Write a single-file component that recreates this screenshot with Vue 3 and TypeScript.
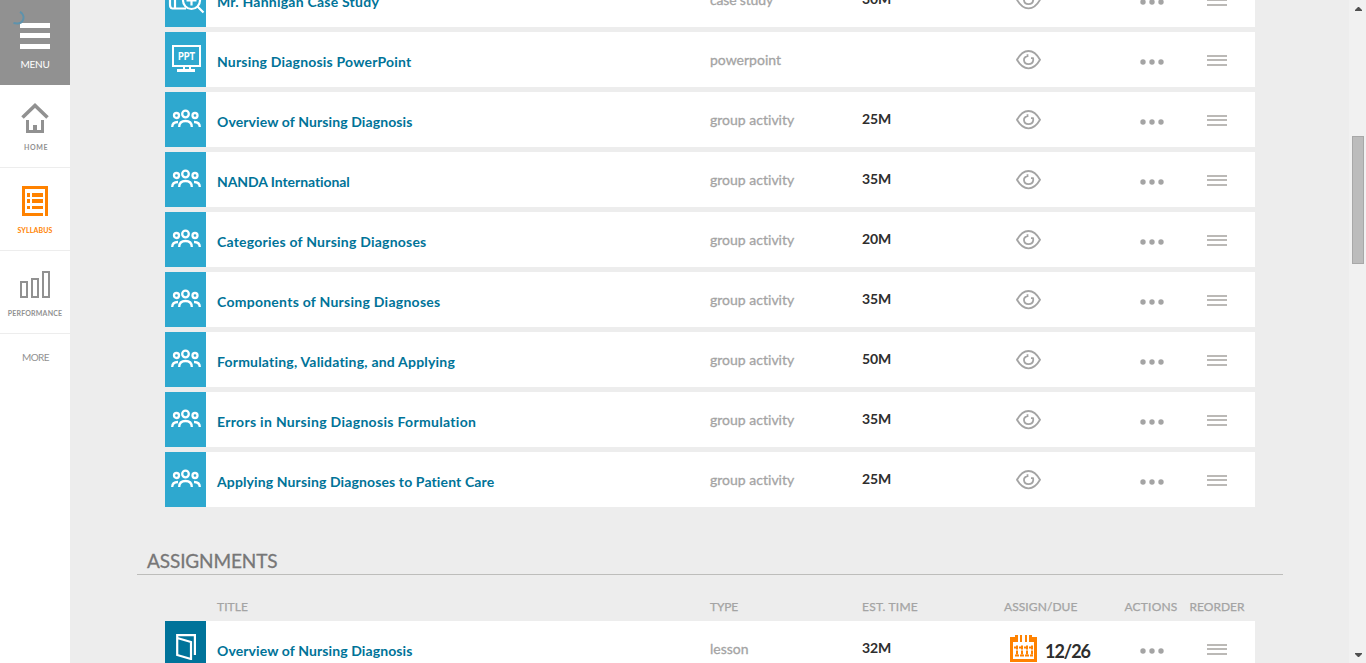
<script setup lang="ts">
type IconName = 'case' | 'ppt' | 'group' | 'lesson'
interface Activity {
  title: string
  width: number
  type: string
  typeWidth: number
  time: string
  icon: IconName
  due?: string
}

const group = (title: string, width: number, time: string): Activity => ({
  title, width, time, type: 'group activity', typeWidth: 84.5, icon: 'group',
})

const activities: Activity[] = [
  { title: 'Mr. Hannigan Case Study', width: 162, type: 'case study', typeWidth: 63, time: '30M', icon: 'case' },
  { title: 'Nursing Diagnosis PowerPoint', width: 194.5, type: 'powerpoint', typeWidth: 71, time: '', icon: 'ppt' },
  group('Overview of Nursing Diagnosis', 195.5, '25M'),
  group('NANDA International', 133, '35M'),
  group('Categories of Nursing Diagnoses', 209.5, '20M'),
  group('Components of Nursing Diagnoses', 223.5, '35M'),
  group('Formulating, Validating, and Applying', 238.5, '50M'),
  group('Errors in Nursing Diagnosis Formulation', 259.5, '35M'),
  group('Applying Nursing Diagnoses to Patient Care', 277.5, '25M'),
]
const assignments: Activity[] = [
  { title: 'Overview of Nursing Diagnosis', width: 195.5, type: 'lesson', typeWidth: 38.5, time: '32M', icon: 'lesson', due: '12/26' },
]
const sections = [
  { id: 'activities', rows: activities },
  { id: 'assignments', rows: assignments },
]

// Tracks a label so that it fills the given measure.
const vFit = {
  mounted(el: HTMLElement, binding: { value: number }) {
    const count = (el.textContent ?? '').length
    if (!count) return
    const natural = el.getBoundingClientRect().width
    el.style.letterSpacing = `${(binding.value - natural) / count}px`
  },
}
</script>

<template>
  <div class="app">
    <nav class="sidebar">
      <div class="menu">
        <svg class="spinner" width="14" height="16" viewBox="0 0 14 16"><path d="M7 .8C13 4 11.500 14.500 .500 12" fill="none" stroke="#5d93ad" stroke-width="2" /></svg>
        <svg width="30" height="26" viewBox="0 0 30 26"><path d="M0 0h30v5H0zM0 10h30v5H0zM0 21h30v5H0z" fill="#fff" /></svg>
        <span class="menu-label"><span v-fit="29">MENU</span></span>
      </div>
      <div class="nav-item home">
        <svg width="28" height="31" viewBox="0 0 28 31">
          <path d="M1.500 14.500L14 2.500L26.500 14.500" fill="none" stroke="#919191" stroke-width="3.600" />
          <path d="M5 17h3v10h4v-5h4v5h4V17h3v13H5z" fill="#919191" />
        </svg>
        <span class="nav-label"><span v-fit="24">HOME</span></span>
      </div>
      <div class="nav-item active">
        <svg width="26" height="30" viewBox="0 0 26 30" fill="#ff8200">
          <path d="M0 0h26v30h-3V3H3v24h18v3H0z" />
          <path d="M5 7h3v4H5zM10 7h11v4H10zM5 13h3v4H5zM10 13h11v4H10zM5 20h3v3H5zM10 20h11v3H10z" />
        </svg>
        <span class="nav-label"><span v-fit="35">SYLLABUS</span></span>
      </div>
      <div class="nav-item">
        <svg width="30" height="30" viewBox="0 0 30 30" fill="none" stroke="#919191" stroke-width="2">
          <path d="M1 11h6v15H1zM12 8h6v18h-6zM23 1h6v25h-6z" />
        </svg>
        <span class="nav-label"><span v-fit="54.5">PERFORMANCE</span></span>
      </div>
      <div class="more"><span v-fit="27">MORE</span></div>
    </nav>

    <main class="content">
      <section v-for="section in sections" :key="section.id" :class="section.id">
        <template v-if="section.id === 'assignments'">
          <h2><span v-fit="130.5">ASSIGNMENTS</span></h2>
          <div class="grid header">
            <i></i>
            <div class="title-head"><span v-fit="31">TITLE</span></div>
            <div><span v-fit="28">TYPE</span></div>
            <div><span v-fit="56">EST. TIME</span></div>
            <div class="due-head"><span v-fit="73.5">ASSIGN/DUE</span></div>
            <div class="center"><span v-fit="53">ACTIONS</span></div>
            <div class="center reorder"><span v-fit="55">REORDER</span></div>
          </div>
        </template>
        <div class="rows">
          <div v-for="row in section.rows" :key="row.title" class="grid row">
            <div class="tile" :class="row.icon">
              <svg v-if="row.icon === 'group'" width="30" height="20" viewBox="0 0 30 20" fill="none" stroke="#fff" stroke-width="2.300">
                <circle cx="14.500" cy="5" r="3.300" /><circle cx="5.500" cy="6.500" r="2.500" /><circle cx="24" cy="6.500" r="2.500" />
                <path d="M1.200 18c0-3.500 1.500-5 5.800-5M28.800 18c0-3.500-1.500-5-5.800-5M8.200 18c0-3.500 2-6 6.300-6s6.300 2.500 6.300 6" />
              </svg>
              <svg v-else-if="row.icon === 'ppt'" width="29" height="28" viewBox="0 0 29 28">
                <path d="M1 1h27v20H1z" fill="none" stroke="#fff" stroke-width="2" />
                <path d="M11 22h2v2h4v-2h2v2h4v3H5v-3h6z" fill="#fff" />
                <text x="6" y="15" textLength="17" lengthAdjust="spacingAndGlyphs" fill="#fff" class="ppt-text">PPT</text>
              </svg>
              <svg v-else-if="row.icon === 'case'" width="36" height="30" viewBox="0 0 36 30" fill="none" stroke="#fff" stroke-width="2.200">
                <path d="M18 26.500H4.500C2 26.500 2 24 2 22V2h18M7 2v24.500" />
                <circle cx="23.500" cy="18.500" r="8.500" /><path d="M29.500 24.500l6 6M23.500 13.500v10M18.500 18.500h10" />
              </svg>
              <svg v-else width="20" height="26" viewBox="0 0 20 26" fill="none" stroke="#fff" stroke-width="2.200">
                <path d="M1.200 4v17l13.800 4V8L1.200 4V1.200h17.700V21" />
              </svg>
            </div>
            <div class="title"><span v-fit="row.width">{{ row.title }}</span></div>
            <div class="type"><span v-fit="row.typeWidth">{{ row.type }}</span></div>
            <div class="time"><span v-fit="29">{{ row.time }}</span></div>
            <div v-if="row.due" class="due">
              <svg width="27" height="27" viewBox="0 0 27 27">
                <path d="M0 2h5V0h3v7H3v17h21V7h-5V0h3v2h5v25H0zM10 0h2v7h-2zM15 0h2v7h-2z" fill="#ff8200" />
                <path d="M4 12.500h19M5 20.500h18" stroke="#ff8200" stroke-width="2" stroke-dasharray="4 1" />
                <path d="M6 12.500h17M6 17.500h17" stroke="#ff8200" stroke-width="4" stroke-dasharray="2 3" />
              </svg>
              <b><span v-fit="45">{{ row.due }}</span></b>
            </div>
            <div v-else class="eye">
              <svg width="26" height="20" viewBox="0 0 26 20" fill="none" stroke="#a4a4a4" stroke-width="1.800">
                <path d="M1 9.800C4.500 3.500 8.500 1 12.500 1S20.500 3.500 24 9.800C20.500 16 16.500 18.300 12.500 18.300S4.500 16 1 9.800z" />
                <path d="M11.500 4.200v2C9 6.800 7.800 8 8 10.300c.6 5 8.300 5 9.200.2.100-.9.100-1.600-.2-2.300h-2" />
              </svg>
            </div>
            <div class="dots">
              <svg width="24" height="6" viewBox="0 0 24 6" fill="#a4a4a4"><circle cx="3" cy="3" r="2.700" /><circle cx="12" cy="3" r="2.700" /><circle cx="21" cy="3" r="2.700" /></svg>
            </div>
            <div class="handle">
              <svg width="20" height="11" viewBox="0 0 20 11"><path d="M0 0h20v2H0zM0 4h20v2H0zM0 9h20v2H0z" fill="#bbb9b6" /></svg>
            </div>
          </div>
        </div>
      </section>
    </main>

    <aside class="scrollbar">
      <svg width="7" height="4" viewBox="0 0 7 4"><path d="M0 4V3l3-3h1l3 3v1z" fill="#505050" /></svg>
      <div class="thumb"></div>
      <svg class="down" width="7" height="4" viewBox="0 0 7 4"><path d="M0 0v1l3 3h1l3-3V0z" fill="#505050" /></svg>
    </aside>
  </div>
</template>

<style>
body { overflow: hidden; }
</style>

<style scoped>
.app {
  display: flex;
  width: 1366px;
  height: 663px;
  overflow: hidden;
  background: #ededed;
  font-family: Lato, "Open Sans", sans-serif;
  color: #a4a4a4;
}
svg { display: block; flex: none; }
span { white-space: nowrap; }
.sidebar { width: 70px; flex: none; background: #fff; color: #919191; }
.menu {
  position: relative;
  box-sizing: border-box;
  height: 85px;
  padding-top: 23px;
  background: #919191;
  color: #fff;
  display: flex;
  flex-direction: column;
  align-items: center;
}
.spinner { position: absolute; left: 13px; top: 11px; }
.menu-label { margin-top: 8px; font-size: 10px; line-height: 14px; }
.nav-item {
  box-sizing: border-box;
  height: 83px;
  padding-top: 18px;
  border-bottom: 1px solid #ededed;
  display: flex;
  flex-direction: column;
  align-items: center;
}
.nav-item:not(.home):not(.active) { padding-top: 20px; }
.nav-item:not(.home):not(.active) .nav-label { margin-top: 7px; }
.nav-label { margin-top: 9px; font-size: 7px; line-height: 10px; font-weight: 700; }
.home .nav-label { margin: 8px 0 0 2px; }
.active { color: #ff8200; }
.more { height: 46px; padding-left: 1px; line-height: 46px; text-align: center; font-size: 10px; }
.content { width: 1279px; flex: none; }
.rows { margin: 0 94px 0 95px; display: flex; flex-direction: column; gap: 5px; }
.activities { margin-top: -28px; }
.assignments { margin-top: 42px; }
.grid { display: grid; grid-template-columns: 41px 504px 152px 141px 121px 54px 77px; }
.row { height: 55px; background: #fff; }
.tile { display: flex; justify-content: center; background: #2ea8cf; }
.tile svg { margin-top: 17px; }
.tile.group svg { margin-left: 1px; }
.tile.ppt svg { margin-top: 13px; margin-left: 2px; }
.tile.case svg { margin-top: 10px; overflow: visible; }
.tile.lesson { background: #00739a; }
.tile.lesson svg { margin-top: 13px; margin-left: 1px; }
.ppt-text { font-family: Lato, sans-serif; font-size: 10.500px; font-weight: 900; }
.title { padding: 20px 0 0 11px; color: #007398; font-size: 14px; line-height: 20px; font-weight: 700; }
.type { padding-top: 18px; font-size: 14px; line-height: 20px; -webkit-text-stroke: 0.3px #a4a4a4; }
.time { padding-top: 17px; color: #2e2e2e; font-size: 14px; line-height: 20px; font-weight: 700; }
.eye { padding: 18px 0 0 13px; }
.due { display: flex; padding: 14px 0 0 7px; color: #2e2e2e; }
.due b { margin: 4px 0 0 8px; font-size: 18px; line-height: 24px; }
.dots { display: flex; justify-content: center; padding: 27px 0 0 1px; }
.handle { display: flex; justify-content: center; padding-top: 23px; }
h2 {
  box-sizing: border-box;
  height: 26px;
  margin: 0 66px 0 67px;
  padding-left: 10px;
  border-bottom: 1px solid #bdbdbb;
  color: #777;
  font-size: 19px;
  line-height: 24px;
  font-weight: 400;
  -webkit-text-stroke: 0.3px #777;
}
.header { height: 46px; margin: 0 94px 0 95px; line-height: 64px; font-size: 12px; -webkit-text-stroke: 0.25px #a4a4a4; }
.title-head { padding-left: 11px; }
.due-head { padding-left: 1px; }
.center { text-align: center; }
.reorder { padding-left: 1px; }
.scrollbar {
  box-sizing: border-box;
  width: 17px;
  flex: none;
  padding: 7px 2px 6px 3px;
  background: #f1f1f1;
  display: flex;
  flex-direction: column;
  align-items: center;
}
.thumb { box-sizing: border-box; width: 12px; height: 128px; margin-top: 125px; background: #bcbcbc; border: 1px solid #a8a8a8; }
.down { margin-top: auto; }
</style>
